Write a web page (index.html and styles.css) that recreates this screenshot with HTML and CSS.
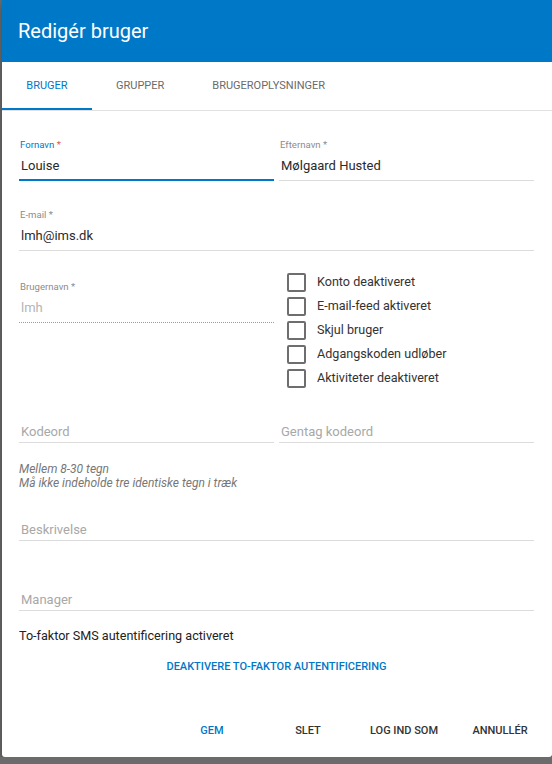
FILE: index.html
```html
<!DOCTYPE html>
<html>

<head>
    <meta charset="UTF-8">
    <meta name="viewport" content="width=device-width, initial-scale=1.0">
    <title>Redigér bruger</title>
    <link rel="stylesheet" href="styles.css">
</head>

<body>

    <div class="dialog">

        <div class="title">Redigér bruger</div>

        <div class="tabs">
            <div class="tab active">Bruger</div>
            <div class="tab">Grupper</div>
            <div class="tab">Brugeroplysninger</div>
        </div>

        <div class="content">

            <div class="row row1">
                <div class="field focused">
                    <label>Fornavn <span class="req">*</span></label>
                    <div class="input">Louise</div>
                </div>
                <div class="field">
                    <label>Efternavn <span class="req">*</span></label>
                    <div class="input">Mølgaard Husted</div>
                </div>
            </div>

            <div class="row row2">
                <div class="field wide">
                    <label>E-mail <span class="req">*</span></label>
                    <div class="input">lmh@ims.dk</div>
                </div>
            </div>

            <div class="row row3">
                <div class="field disabled">
                    <label>Brugernavn <span class="req">*</span></label>
                    <div class="input">lmh</div>
                </div>
                <div class="checks">
                    <div class="check"><span class="box"></span>Konto deaktiveret</div>
                    <div class="check"><span class="box"></span>E-mail-feed aktiveret</div>
                    <div class="check"><span class="box"></span>Skjul bruger</div>
                    <div class="check"><span class="box"></span>Adgangskoden udløber</div>
                    <div class="check"><span class="box"></span>Aktiviteter deaktiveret</div>
                </div>
            </div>

            <div class="row">
                <div class="field empty">
                    <div class="input">Kodeord</div>
                </div>
                <div class="field empty">
                    <div class="input">Gentag kodeord</div>
                </div>
            </div>

            <p class="hint">Mellem 8-30 tegn<br>Må ikke indeholde tre identiske tegn i træk</p>

            <div class="field empty wide desc">
                <div class="input">Beskrivelse</div>
            </div>

            <div class="field empty wide manager">
                <div class="input">Manager</div>
            </div>

            <p class="sms">To-faktor SMS autentificering activeret</p>

            <div class="center">
                <div class="btn primary">Deaktivere to-faktor autentificering</div>
            </div>

        </div>

        <div class="actions">
            <div class="btn primary">Gem</div>
            <div class="btn">Slet</div>
            <div class="btn">Log ind som</div>
            <div class="btn">Annullér</div>
        </div>

    </div>

</body>

</html>
```

FILE: styles.css
```css
* {
    margin: 0;
    padding: 0;
    box-sizing: border-box;
}

body {
    background-color: #6b6b6b;
    font-family: Roboto, "Liberation Sans", sans-serif;
    color: #222;
}

.dialog {
    width: 550px;
    height: 757px;
    margin-left: 2px;
    background-color: #fff;
    border-radius: 0 0 3px 3px;
    box-shadow: 0 4px 10px rgba(0, 0, 0, 0.35);
    display: flex;
    flex-direction: column;
}

.title {
    height: 62px;
    line-height: 62px;
    padding: 0 16px;
    background-color: #0078c8;
    color: #fff;
    font-size: 20px;
}

.tabs {
    display: flex;
    height: 49px;
    border-bottom: 1px solid #e0e0e0;
}

.tab {
    min-width: 90px;
    padding: 0 24px;
    text-align: center;
    line-height: 48px;
    font-size: 11px;
    text-transform: uppercase;
    color: #6a6a6a;
}

.tab.active {
    color: #0078c8;
    border-bottom: 2px solid #0078c8;
}

.content {
    flex: 1;
    padding: 28px 18px 0 17px;
}

.row {
    display: grid;
    grid-template-columns: 255px 255px;
    column-gap: 5px;
}

.row1 {
    margin-bottom: 28px;
}

.row2 {
    margin-bottom: 22px;
}

.row3 {
    margin-bottom: 12px;
}

.field label {
    display: block;
    height: 12px;
    line-height: 12px;
    padding-left: 1px;
    font-size: 9.6px;
    color: #8c8c8c;
}

.field .input {
    margin-top: 5px;
    padding-bottom: 4px;
    text-indent: 2px;
    line-height: 20px;
    font-size: 13px;
    color: #2a2a2a;
    border-bottom: 1px solid #dcdcdc;
}

.field.wide {
    width: 515px;
}

.field.focused label {
    color: #0078c8;
}

.field.focused .req {
    color: #e5533d;
}

.field.focused .input {
    border-bottom: 2px solid #0078c8;
    padding-bottom: 3px;
}

.field.disabled {
    padding-top: 8px;
}

.field.disabled .input {
    color: #b4b4b4;
    border-bottom: 1px dotted #9a9a9a;
}

.field.empty {
    padding-top: 12px;
}

.field.empty .input {
    padding-bottom: 0;
    color: #a8a8a8;
}

.checks {
    padding-left: 8px;
}

.check {
    display: flex;
    height: 24px;
    font-size: 12.6px;
    line-height: 17px;
    color: #333;
}

.check .box {
    width: 19px;
    height: 19px;
    border: 2px solid #6e6e6e;
    border-radius: 2px;
    margin-right: 11px;
}

.hint {
    margin-top: 19px;
    font-size: 12px;
    line-height: 14px;
    font-style: italic;
    color: #777;
}

.desc {
    margin-top: 13px;
}

.manager {
    margin-top: 32px;
}

.sms {
    margin-top: 17px;
    font-size: 12.6px;
    line-height: 16px;
    color: #222;
}

.center {
    margin-top: 5px;
    display: flex;
    justify-content: center;
}

.btn {
    min-width: 88px;
    height: 36px;
    line-height: 36px;
    padding: 0 8px;
    text-align: center;
    font-size: 11px;
    font-weight: 500;
    text-transform: uppercase;
    color: #333;
}

.btn.primary {
    color: #0078c8;
}

.actions {
    display: flex;
    justify-content: flex-end;
    padding: 8px;
}

.actions .btn {
    margin-left: 8px;
}
```
